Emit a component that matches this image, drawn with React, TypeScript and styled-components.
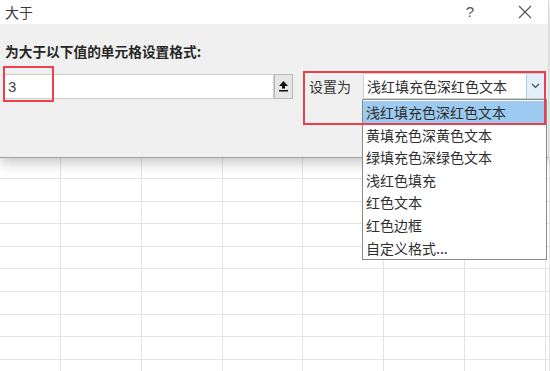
import styled, { createGlobalStyle } from "styled-components";

const GlobalStyle = createGlobalStyle`
  html, body {
    margin: 0;
    padding: 0;
    background: #ffffff;
  }
  body {
    font-family: "Noto Sans CJK SC", "Noto Sans", sans-serif;
    color: #333333;
  }
`

const Screen = styled.div`
  position: relative;
  width: 550px;
  height: 371px;
  overflow: hidden;
  background: #ffffff;
`

const Dialog = styled.div`
  position: relative;
  z-index: 2;
  display: flex;
  flex-direction: column;
  width: 548px;
  border-right: 1px solid #d8d8d8;
  border-bottom: 1px solid #a0a0a0;
  box-shadow: 0 5px 12px rgba(0, 0, 0, 0.22);
`

const TitleBar = styled.div`
  display: flex;
  align-items: center;
  height: 24px;
  padding-left: 5px;
  background: #ffffff;
  font-size: 14px;
  line-height: 20px;
  color: #3a3a3a;
`

const Title = styled.div`
  flex: 1;
`

const TitleButton = styled.div`
  display: flex;
  align-items: center;
  justify-content: center;
  width: 20px;
  height: 20px;
  margin-right: ${(p: { $gap: number }) => p.$gap}px;
  font-family: "Liberation Sans", sans-serif;
  font-size: 15px;
  color: #555555;
`

const Body = styled.div`
  display: flex;
  flex-direction: column;
  gap: 13px;
  height: 133px;
  box-sizing: border-box;
  padding: 18px 0 0 0;
  background: #f0f0f0;
`

const Heading = styled.div`
  padding-left: 5px;
  font-size: 13.7px;
  line-height: 18px;
  font-weight: bold;
  color: #262626;
`

const Row = styled.div`
  display: flex;
  align-items: center;
  height: 26px;
  padding-left: 3px;
`

const ValueBox = styled.div`
  width: 271px;
  height: 25px;
  box-sizing: border-box;
  padding-left: 4px;
  border: 1px solid #cdcdcd;
  background: #ffffff;
  font-family: "Liberation Sans", sans-serif;
  font-size: 15px;
  line-height: 23px;
  color: #444444;
`

const CollapseButton = styled.div`
  display: flex;
  align-items: center;
  justify-content: center;
  width: 19px;
  height: 25px;
  box-sizing: border-box;
  border: 1px solid #b9b9b9;
  background: #e6e6e6;
`

const FieldLabel = styled.div`
  margin-left: 16px;
  width: 54px;
  font-size: 14px;
  line-height: 20px;
  color: #333333;
`

const Select = styled.div`
  display: flex;
  width: 182px;
  height: 26px;
  box-sizing: border-box;
  border: 1px solid #cfcfcf;
  background: #ffffff;
`

const SelectText = styled.div`
  flex: 1;
  padding-left: 3px;
  font-size: 14px;
  line-height: 24px;
  color: #2e2e2e;
`

const SelectArrow = styled.div`
  display: flex;
  align-items: center;
  justify-content: center;
  width: 17px;
  border-left: 1px solid #a8cdee;
  background: #e3effa;
`

const Sheet = styled.div`
  display: grid;
  grid-template-columns: 61px repeat(6, 80.8px) 1fr;
  grid-template-rows: 21px;
  grid-auto-rows: 22.6px;
`

const Cell = styled.div`
  border-right: 1px solid #e4e4e4;
  border-bottom: 1px solid #e4e4e4;
`

const Marker = styled.div<{ $l: number; $t: number; $w: number; $h: number }>`
  position: absolute;
  z-index: 4;
  left: ${(p) => p.$l}px;
  top: ${(p) => p.$t}px;
  width: ${(p) => p.$w}px;
  height: ${(p) => p.$h}px;
  box-sizing: border-box;
  border: 2px solid #e8404c;
  pointer-events: none;
`

const DropList = styled.div`
  position: absolute;
  z-index: 3;
  left: 362px;
  top: 99px;
  width: 185px;
  box-sizing: border-box;
  padding-top: 1px;
  border: 1px solid #8a8a8a;
  background: #ffffff;
`

const Option = styled.div<{ $active?: boolean }>`
  height: 22.6px;
  padding-left: 3px;
  font-size: 14px;
  line-height: 22px;
  color: #2e2e2e;
  background: ${(p) => (p.$active ? "#9ccaf0" : "transparent")};
`

const options = [
  "浅红填充色深红色文本",
  "黄填充色深黄色文本",
  "绿填充色深绿色文本",
  "浅红色填充",
  "红色文本",
  "红色边框",
  "自定义格式...",
]

const CloseIcon = () => (
  <svg width="14" height="14" viewBox="0 0 14 14">
    <path d="M1 1 L13 13 M13 1 L1 13" stroke="#555" strokeWidth="1.2" />
  </svg>
)

const CollapseIcon = () => (
  <svg width="11" height="12" viewBox="0 0 11 12">
    <path d="M5.5 1 L10 6 L7 6 L7 8.5 L4 8.5 L4 6 L1 6 Z" fill="#111" />
    <rect x="1" y="10" width="9" height="1.5" fill="#111" />
  </svg>
)

const ChevronIcon = () => (
  <svg width="9" height="6" viewBox="0 0 9 6">
    <path d="M1 1 L4.5 4.5 L8 1" stroke="#444" strokeWidth="1.2" fill="none" />
  </svg>
)

export default function App() {
  const cells = Array.from({ length: 10 * 8 })
  return (
    <Screen>
      <GlobalStyle />
      <Dialog>
        <TitleBar>
          <Title>大于</Title>
          <TitleButton $gap={35}>?</TitleButton>
          <TitleButton $gap={13}>
            <CloseIcon />
          </TitleButton>
        </TitleBar>
        <Body>
          <Heading>为大于以下值的单元格设置格式:</Heading>
          <Row>
            <ValueBox>3</ValueBox>
            <CollapseButton>
              <CollapseIcon />
            </CollapseButton>
            <FieldLabel>设置为</FieldLabel>
            <Select>
              <SelectText>浅红填充色深红色文本</SelectText>
              <SelectArrow>
                <ChevronIcon />
              </SelectArrow>
            </Select>
          </Row>
        </Body>
      </Dialog>
      <Sheet>
        {cells.map((_, i) => (
          <Cell key={i} />
        ))}
      </Sheet>
      <DropList>
        {options.map((o, i) => (
          <Option key={o} $active={i === 0}>
            {o}
          </Option>
        ))}
      </DropList>
      <Marker $l={3} $t={66} $w={51} $h={36} />
      <Marker $l={303} $t={71} $w={243} $h={54} />
    </Screen>
  )
}
